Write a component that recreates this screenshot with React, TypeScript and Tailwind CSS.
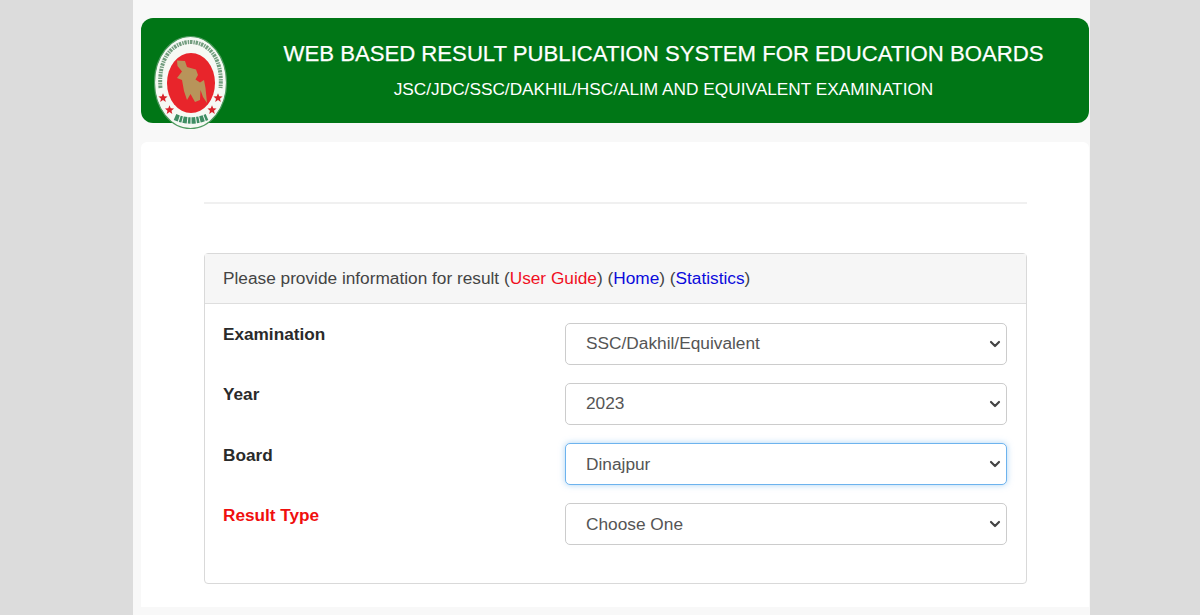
import { ChevronDown } from 'lucide-react';

const fieldRows = [
  { label: 'Examination', value: 'SSC/Dakhil/Equivalent', options: ['SSC/Dakhil/Equivalent', 'JSC/JDC', 'HSC/Alim/Equivalent'] },
  { label: 'Year', value: '2023', options: ['2023', '2022', '2021'] },
  { label: 'Board', value: 'Dinajpur', options: ['Dinajpur', 'Dhaka', 'Rajshahi'], focused: true },
  { label: 'Result Type', value: 'Choose One', options: ['Choose One', 'Individual Result', 'Institution Result'], danger: true },
];

function Star({ x, y }: { x: number; y: number }) {
  const pts = [0, 1, 2, 3, 4, 5, 6, 7, 8, 9]
    .map((i) => {
      const r = i % 2 === 0 ? 4.8 : 2.1;
      const a = (Math.PI / 5) * i - Math.PI / 2;
      return `${x + r * Math.cos(a)},${y + r * Math.sin(a)}`;
    })
    .join(' ');
  return <polygon points={pts} fill="#d8232a" />;
}

function GovtSeal() {
  return (
    <svg viewBox="0 0 74 94" className="absolute left-[13px] top-[18px] h-[94px] w-[74px] blur-[0.4px]">
      <ellipse cx="36.5" cy="46.5" rx="36" ry="46" fill="#f6f9f4" stroke="#4f9a60" strokeWidth="1.2" />
      {/* blurred lettering round the rim */}
      <path
        d="M6.5 52 C4 24 17 6.5 36.5 6 C56 6.5 69 24 66.5 52"
        fill="none"
        stroke="#2b6b3f"
        strokeWidth="4"
        strokeDasharray="2.4 1 1.4 0.8"
        opacity="0.65"
      />
      <path
        d="M21 81 Q37 88 53 81"
        fill="none"
        stroke="#1f7a4a"
        strokeWidth="6.5"
        strokeDasharray="4 1 2.5 1"
        opacity="0.85"
      />
      <ellipse cx="37" cy="47" rx="24" ry="30" fill="#e8252b" />
      <path
        d="M23 24.5 L31 25 L33 31 L42 33.5 L44 39 L41.5 43.5 L46 46.5 L50 44 L51.5 52 L53 67 L49 61 L46.5 54 L46 64 L41 66 L36.5 58 L33 64 L30 55 L28 44 L23 42 L28 35.5 L23.5 30 Z"
        fill="#b8945a"
      />
      <Star x={9} y={62} />
      <Star x={64} y={62} />
      <Star x={15.5} y={74} />
      <Star x={58} y={74} />
    </svg>
  );
}

export default function App() {
  return (
    <div className="h-[615px] overflow-hidden bg-[#dcdcdc] font-['Liberation_Sans',Arial,sans-serif]">
      <div className="ml-[133px] h-full w-[957px] bg-[#f8f8f8] pl-2 pt-[18px]">
        <header className="relative flex h-[105px] w-[948px] flex-col items-center rounded-[12px] bg-[#007616] pl-[97px] text-white">
          <GovtSeal />
          <h1 className="mt-[20px] text-[22.15px] leading-[32px] font-normal whitespace-nowrap [-webkit-text-stroke:0.25px_white]">
            WEB BASED RESULT PUBLICATION SYSTEM FOR EDUCATION BOARDS
          </h1>
          <p className="mt-[7px] text-[17.25px] leading-[24px] whitespace-nowrap">
            JSC/JDC/SSC/DAKHIL/HSC/ALIM AND EQUIVALENT EXAMINATION
          </p>
        </header>

        <main className="mt-[19px] h-[465px] w-[948px] rounded-t-[6px] bg-white pl-[63px] pt-[60px]">
          <hr className="w-[823px] border-t-2 border-[#f0f0f0]" />
          <section className="mt-[49px] h-[331px] w-[823px] rounded-[4px] border border-[#d9d9d9]">
            <div className="flex h-[50px] items-center border-b border-[#dedede] bg-[#f6f6f6] pl-[18px] text-[17.25px] text-[#444]">
              <span>
                Please provide information for result (<span className="text-[#f00f1e]">User Guide</span>) (
                <span className="text-[#0b0bdc]">Home</span>) (<span className="text-[#0b0bdc]">Statistics</span>)
              </span>
            </div>
            <div className="flex flex-col gap-[18px] pt-[19px] pl-[18px] pr-[19px]">
              {fieldRows.map((row) => (
                <div key={row.label} className="flex h-[42px] items-start justify-between">
                  <label
                    className={`text-[17.2px] leading-[22px] font-bold ${row.danger ? 'text-[#f00f0f]' : 'text-[#2a2a2a]'} ${
                      row.focused || row.danger ? 'pt-px' : ''
                    }`}
                  >
                    {row.label}
                  </label>
                  <div className="relative">
                    <select
                      defaultValue={row.value}
                      className={
                        row.focused
                          ? 'h-[42px] w-[442px] appearance-none rounded-[5px] border border-[#6db3ee] bg-white pt-[2px] pl-[20px] text-[17.3px] text-[#555] shadow-[0_0_6px_rgba(102,175,233,0.55)]'
                          : row.danger
                            ? 'h-[42px] w-[442px] appearance-none rounded-[5px] border border-[#cccccc] bg-white pt-[2px] pl-[20px] text-[17.3px] text-[#555]'
                            : 'h-[42px] w-[442px] appearance-none rounded-[5px] border border-[#cccccc] bg-white pl-[20px] text-[17.3px] text-[#555]'
                      }
                    >
                      {row.options.map((o) => (
                        <option key={o}>{o}</option>
                      ))}
                    </select>
                    <ChevronDown
                      size={16}
                      strokeWidth={3.2}
                      className="pointer-events-none absolute right-[4px] top-[13px] text-[#444]"
                    />
                  </div>
                </div>
              ))}
            </div>
          </section>
        </main>
      </div>
    </div>
  );
}
